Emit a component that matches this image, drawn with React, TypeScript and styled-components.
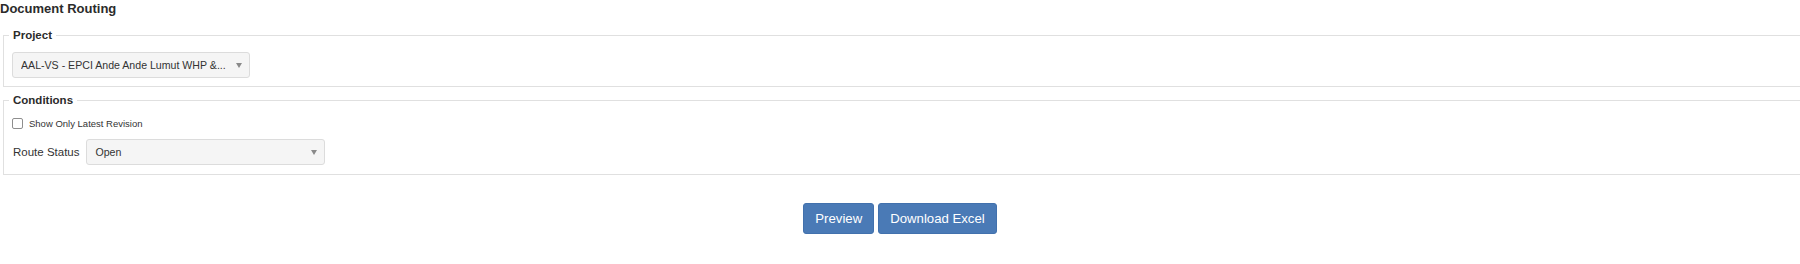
import React from "react";
import styled, { createGlobalStyle } from "styled-components";

const Global = createGlobalStyle`
  html, body {
    margin: 0;
    padding: 0;
    background: #ffffff;
    overflow: hidden;
  }
  body {
    font-family: "Liberation Sans", Arial, Helvetica, sans-serif;
    color: #333333;
  }
`;

const Page = styled.div`
  width: 1800px;
  height: 264px;
  overflow: hidden;
`;

const Heading = styled.h1`
  margin: 0;
  height: 18px;
  font-size: 13px;
  line-height: 18px;
  font-weight: bold;
  color: #2b2b2b;
`;

const Group = styled.fieldset<{ $top: number; $padTop: number; $padBottom: number }>`
  box-sizing: border-box;
  width: 1860px;
  margin: ${(p) => p.$top}px 0 0 3px;
  padding: ${(p) => p.$padTop}px 8px ${(p) => p.$padBottom}px 8px;
  border: 1px solid #e0e0e0;
  min-width: 0;
`;

const Legend = styled.legend`
  margin-left: -3px;
  padding: 0 4px;
  font-size: 11.5px;
  line-height: 14px;
  font-weight: bold;
  color: #2b2b2b;
`;

const SelectWrap = styled.div<{ $width: number }>`
  position: relative;
  width: ${(p) => p.$width}px;
  height: 26px;
`;

const Select = styled.select`
  appearance: none;
  -webkit-appearance: none;
  box-sizing: border-box;
  width: 100%;
  height: 26px;
  margin: 0;
  padding: 0 14px 0 8px;
  border: 1px solid #dcdcdc;
  border-radius: 3px;
  background: #f5f5f5;
  font-family: "Liberation Sans", Arial, Helvetica, sans-serif;
  font-size: 10.6px;
  color: #333333;
  outline: none;
  text-overflow: clip;
`;

const Arrow = styled.span`
  position: absolute;
  right: 8px;
  top: 50%;
  margin-top: -2px;
  width: 0;
  height: 0;
  border-left: 3px solid transparent;
  border-right: 3px solid transparent;
  border-top: 5px solid #8a8a8a;
  pointer-events: none;
`;

const CheckRow = styled.label`
  display: flex;
  align-items: center;
  gap: 6px;
  height: 13px;
  margin-top: 10px;
  font-size: 9.5px;
  color: #333333;
`;

const Check = styled.input`
  appearance: none;
  -webkit-appearance: none;
  box-sizing: border-box;
  width: 11px;
  height: 11px;
  margin: 0;
  border: 1px solid #8e8e8e;
  border-radius: 2px;
  background: #ffffff;
`;

const FieldRow = styled.div`
  display: flex;
  align-items: center;
  gap: 7px;
  margin-top: 9px;
`;

const FieldLabel = styled.label`
  margin-left: 1px;
  font-size: 11.5px;
  color: #333333;
`;

const Actions = styled.div`
  display: flex;
  justify-content: center;
  gap: 4px;
  margin-top: 28px;
`;

const Button = styled.button`
  height: 31px;
  padding: 0 11px;
  border: 1px solid #4271ad;
  border-radius: 3px;
  background: #4a7ab6;
  color: #ffffff;
  font-family: "Liberation Sans", Arial, Helvetica, sans-serif;
  font-size: 13.2px;
  cursor: pointer;
`;

export default function App() {
  return (
    <Page>
      <Global />
      <Heading>Document Routing</Heading>
      <Group $top={10} $padTop={10} $padBottom={8}>
        <Legend>Project</Legend>
        <SelectWrap $width={238}>
          <Select defaultValue="aal">
            <option value="aal">AAL-VS - EPCI Ande Ande Lumut WHP &amp;...</option>
          </Select>
          <Arrow />
        </SelectWrap>
      </Group>
      <Group $top={6} $padTop={0} $padBottom={9}>
        <Legend>Conditions</Legend>
        <CheckRow>
          <Check type="checkbox" />
          Show Only Latest Revision
        </CheckRow>
        <FieldRow>
          <FieldLabel>Route Status</FieldLabel>
          <SelectWrap $width={239}>
            <Select defaultValue="open">
              <option value="open">Open</option>
              <option value="closed">Closed</option>
            </Select>
            <Arrow />
          </SelectWrap>
        </FieldRow>
      </Group>
      <Actions>
        <Button>Preview</Button>
        <Button>Download Excel</Button>
      </Actions>
    </Page>
  );
}
